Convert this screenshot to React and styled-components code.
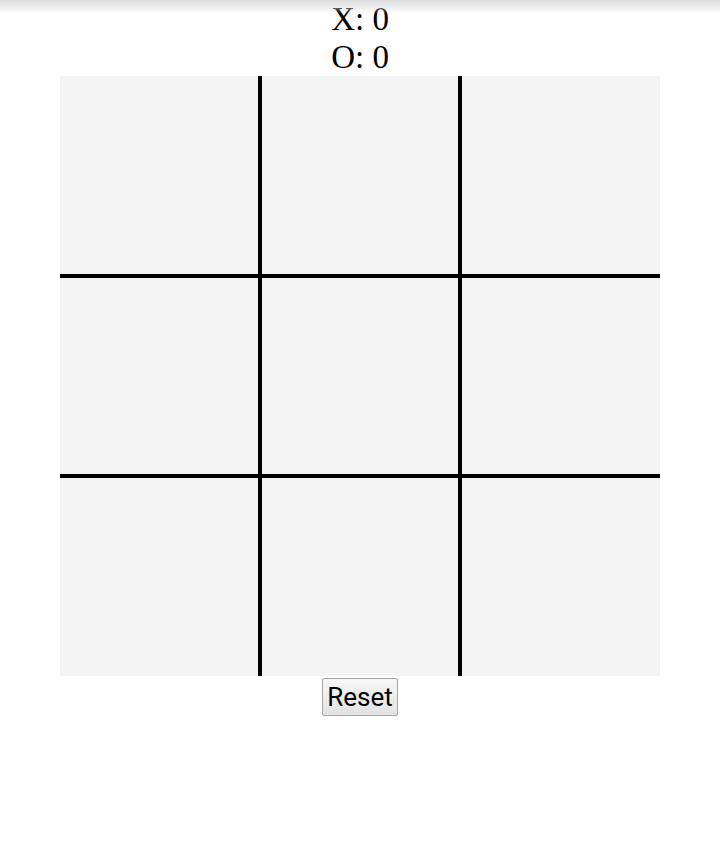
import React, { useState } from "react";
import styled, { createGlobalStyle } from "styled-components";

const GlobalStyle = createGlobalStyle`
  body {
    margin: 0;
    background: #fff;
    font-family: "Liberation Serif", serif;
  }
  body::before {
    content: "";
    position: fixed;
    top: 0;
    left: 0;
    right: 0;
    height: 14px;
    background: linear-gradient(#dcdcdc, rgba(255, 255, 255, 0));
    pointer-events: none;
  }
`;

function App() {
  const [cells, setCells] = useState(Array(9).fill(null));
  const [xIsNext, setXIsNext] = useState(true);
  const [score] = useState({ X: 0, O: 0 });

  const play = (i) => {
    if (cells[i]) return;
    const next = cells.slice();
    next[i] = xIsNext ? "X" : "O";
    setCells(next);
    setXIsNext(!xIsNext);
  };

  const reset = () => {
    setCells(Array(9).fill(null));
    setXIsNext(true);
  };

  return (
    <StPage>
      <GlobalStyle />
      <StScore>X: {score.X}</StScore>
      <StScore>O: {score.O}</StScore>
      <StBoard>
        {cells.map((value, i) => (
          <StCell key={i} $col={i % 3} $row={Math.floor(i / 3)} onClick={() => play(i)}>
            {value}
          </StCell>
        ))}
      </StBoard>
      <StReset onClick={reset}>Reset</StReset>
    </StPage>
  );
}

export default App;

const StPage = styled.div`
  display: flex;
  flex-direction: column;
  align-items: center;
`;

const StScore = styled.div`
  font-size: 33px;
  line-height: 38px;
  color: #000;
`;

const StBoard = styled.div`
  display: grid;
  grid-template-columns: repeat(3, 200px);
  grid-template-rows: repeat(3, 200px);
  background-color: #f3f3f3;
`;

const StCell = styled.div`
  box-sizing: border-box;
  display: flex;
  justify-content: center;
  align-items: center;
  font-size: 120px;
  cursor: pointer;
  border-left: ${(props) => (props.$col > 0 ? "2px solid #000" : "none")};
  border-right: ${(props) => (props.$col < 2 ? "2px solid #000" : "none")};
  border-top: ${(props) => (props.$row > 0 ? "2px solid #000" : "none")};
  border-bottom: ${(props) => (props.$row < 2 ? "2px solid #000" : "none")};
`;

const StReset = styled.button`
  box-sizing: border-box;
  margin-top: 2px;
  width: 76px;
  height: 38px;
  padding: 0;
  font-family: Roboto, sans-serif;
  font-size: 26px;
  line-height: 36px;
  color: #000;
  background: linear-gradient(#f7f7f7, #e2e2e2);
  border: 1px solid #a6a6a6;
  border-radius: 2px;
  cursor: pointer;
`;
